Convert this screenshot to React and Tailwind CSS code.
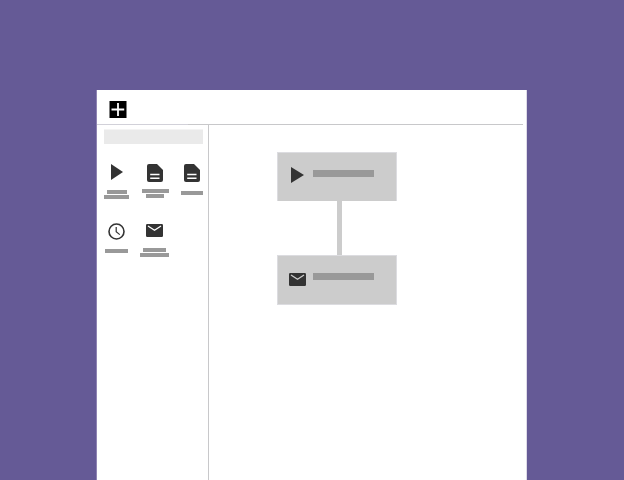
function PlayIcon({ className }) {
  return (
    <svg className={className} viewBox="0 0 12 16" preserveAspectRatio="none" fill="#333">
      <path d="M0 0L12 8L0 16Z" />
    </svg>
  );
}

function DocumentIcon() {
  return (
    <svg className="block h-[18px] w-4" viewBox="0 0 16 18">
      <path d="M2 0H10L16 6V16Q16 18 14 18H2Q0 18 0 16V2Q0 0 2 0Z" fill="#333" />
      <path d="M3.2 10.5H12.5M3.2 14.3H12.5" stroke="#fff" strokeWidth="1.5" />
    </svg>
  );
}

function MailIcon({ className, flap }) {
  return (
    <svg className={className} viewBox="0 0 17 13" preserveAspectRatio="none">
      <rect width="17" height="13" rx="1.2" fill="#333" />
      <path d="M2 2L8.5 6.3L15 2" fill="none" stroke={flap} strokeWidth="1.3" />
    </svg>
  );
}

function ClockIcon() {
  return (
    <svg className="block size-[17px]" viewBox="0 0 17 17" fill="none" stroke="#333">
      <circle cx="8.5" cy="8.5" r="7.5" strokeWidth="1.6" />
      <path d="M8.2 4V8.8L11.8 11.6" strokeWidth="1.2" />
    </svg>
  );
}

function Tool({ className, icon, bars }) {
  return (
    <div className={`flex flex-col items-center ${className}`}>
      {icon}
      {bars.map((bar, i) => (
        <div key={i} className={`shrink-0 bg-[#999] ${bar}`} />
      ))}
    </div>
  );
}

function Node({ className, children }) {
  return (
    <div className={`flex w-[120px] items-start border-x border-t border-[#dcdce0] bg-[#ccc] ${className}`}>
      {children}
    </div>
  );
}

export default function App() {
  return (
    <div className="flex h-[480px] w-[624px] overflow-hidden bg-[#655a96] pt-[90px] pl-24">
      <main className="flex h-[390px] w-[431px] flex-col border-l border-[#8f84b3] bg-white">
        <header className="flex h-[34px] shrink-0 items-start border-r border-[#dedbe8] pt-[11px] pl-3">
          <svg className="block h-[17px] w-[18px]" viewBox="0 0 18 17">
            <rect x="0.5" width="17" height="17" fill="#000" />
            <path d="M2.5 8.5H15.2M9 2V15" stroke="#fff" strokeWidth="1.8" />
          </svg>
        </header>
        <div className="flex h-px shrink-0 border-r border-[#dedbe8]">
          <div className="w-[91px] bg-[#d2d1d9]" />
          <div className="w-[335px] bg-[#c8c8ca]" />
        </div>
        <div className="flex min-h-0 flex-1 border-r border-[#dedbe8]">
          <aside className="w-28 shrink-0 border-r border-[#c8c8ca] pt-1">
            <div className="ml-[7px] h-[15px] w-[99px] border-t border-[#f4f4f4] bg-[#eaeaea]" />
            <div className="mt-5 ml-[7px] flex h-[58px] items-start">
              <Tool
                className="w-[25px]"
                icon={<PlayIcon className="block h-4 w-3" />}
                bars={['mt-[9.5px] h-[4px] w-[20px]', 'mt-[1.5px] h-[4px] w-[25px]']}
              />
              <Tool
                className="ml-[12px] w-[28px]"
                icon={<DocumentIcon />}
                bars={['mt-[6.5px] h-[4px] w-[27px]', 'mt-[1.5px] h-[4px] w-[18px]']}
              />
              <Tool
                className="ml-[12px] w-[22px]"
                icon={<DocumentIcon />}
                bars={['mt-[8.5px] h-[4px] w-[22.5px]']}
              />
            </div>
            <div className="ml-[7px] flex items-start pt-px">
              <Tool
                className="w-[25px]"
                icon={<ClockIcon />}
                bars={['mt-[8.5px] h-[4px] w-[23px]']}
              />
              <Tool
                className="ml-[11px] w-[29px]"
                icon={<MailIcon className="mt-[0.5px] block h-[13px] w-[17px]" flap="#fff" />}
                bars={['mt-[11px] h-[4px] w-[23px]', 'mt-px h-[4px] w-[29px]']}
              />
            </div>
          </aside>
          <section className="flex flex-col items-start pt-[27px] pl-[68px]">
            <Node className="h-[49px]">
              <PlayIcon className="mt-[14px] ml-[13px] block h-4 w-[13px]" />
              <div className="mt-[17px] ml-[8.5px] h-[7px] w-[61.5px] bg-[#999]" />
            </Node>
            <div className="ml-[59.5px] h-[54px] w-[5px] bg-[#ccc]" />
            <Node className="h-[50px] border-b">
              <MailIcon className="mt-[17px] ml-[11px] block h-[13px] w-[17px]" flap="#ccc" />
              <div className="mt-[17px] ml-[6.5px] h-[7px] w-[61.5px] bg-[#999]" />
            </Node>
          </section>
        </div>
      </main>
    </div>
  );
}
